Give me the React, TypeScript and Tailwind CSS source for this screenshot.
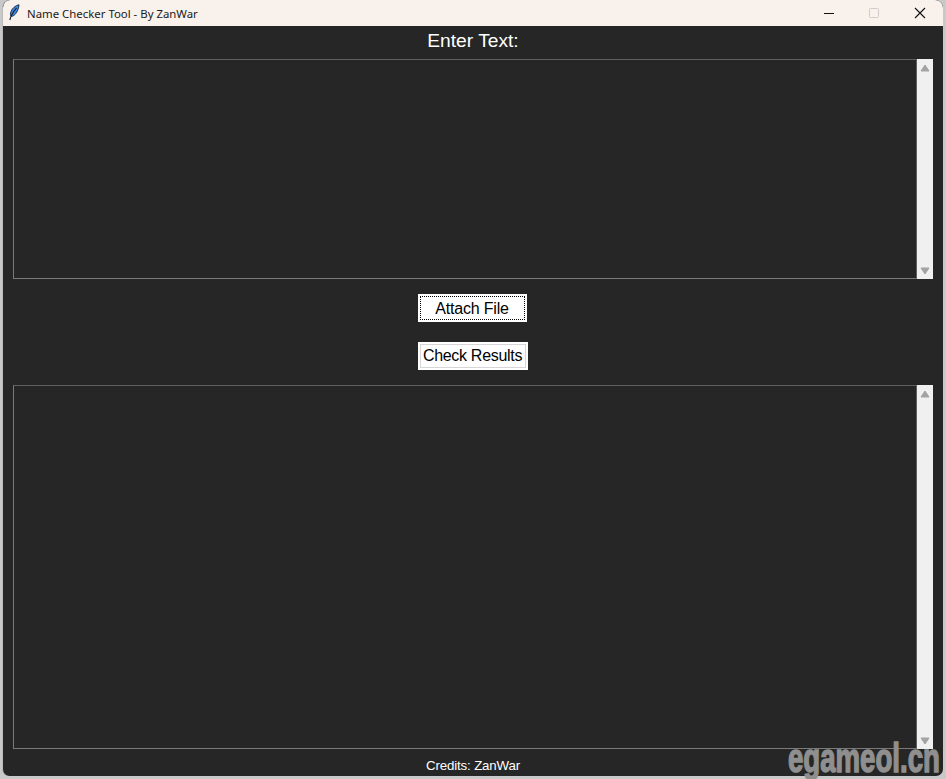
const sans = "font-['Liberation_Sans',Arial,sans-serif]";

const Arrow = ({ down }: { down?: boolean }) => (
  <svg width="16" height="17" viewBox="0 0 16 17" className="block">
    <path d={down ? "M4 7h8l-4 6z" : "M8 5l4 6H4z"} fill="#a3a3a3" stroke="#a3a3a3" strokeWidth="1" strokeLinejoin="round" />
  </svg>
);

const TextArea = ({ className }: { className: string }) => (
  <div className={`flex mx-[10px] ${className}`}>
    <div className="w-[904px] border border-[#7a7a7a] border-t-[#5f5f5f] border-r-[#5f5f5f] bg-[#262626]" />
    <div className="w-4 flex flex-col justify-between bg-[#f0f0f0] pt-[1px] pb-[1px]">
      <Arrow />
      <Arrow down />
    </div>
  </div>
);

const Feather = () => (
  <svg width="12" height="17" viewBox="0 0 12 17">
    <path d="M11 .8C7.500 1.500 3.500 4.500 2.600 9c-.4 2 0 3 .8 3.500C7 12 10.500 7 11 .8z" fill="#3f8ae0" stroke="#10263f" strokeWidth="0.9" />
    <path d="M8.500 4C5.500 7.500 3 11 1.800 16" fill="none" stroke="#0b1420" strokeWidth="1.100" />
  </svg>
);

const TitleBar = () => (
  <div className="h-[26px] flex items-center bg-[#f8f1ec] rounded-t-[7px]">
    <div className="w-[24px] pl-[5px] pb-[2px] flex items-center shrink-0">
      <Feather />
    </div>
    <span className="text-[11.4px] text-[#1a1a1a] font-['Noto_Sans',sans-serif] leading-none pt-[1px]">
      Name Checker Tool - By ZanWar
    </span>
    <div className="ml-auto flex items-center">
      <svg width="46" height="26" viewBox="0 0 46 26">
        <path d="M19 13.500h10" stroke="#111" strokeWidth="1" />
      </svg>
      <svg width="46" height="26" viewBox="0 0 46 26">
        <rect x="18.500" y="8.500" width="9" height="9" rx="1" fill="none" stroke="#cfcbc8" />
      </svg>
      <svg width="46" height="26" viewBox="0 0 46 26">
        <path d="M18 8l10 10M28 8L18 18" stroke="#111" strokeWidth="1.100" />
      </svg>
    </div>
  </div>
);

export default function App() {
  return (
    <div className={`relative w-[946px] h-[779px] overflow-hidden bg-[#c9c9c9] ${sans}`}>
      <div className="w-[941px] h-[776px] ml-[2px] flex flex-col rounded-t-[8px] rounded-b-[7px] overflow-hidden border-l border-[#b9b9b9] bg-[#262626]">
        <TitleBar />
        <div className="h-[33px] flex items-start justify-center text-[19.2px] text-white leading-none pt-[5px]">
          Enter Text:
        </div>
        <TextArea className="h-[220px]" />
        <div className="flex flex-col items-center pt-[15px] pb-[15px] gap-5">
          <button className="w-[109px] h-[28px] -ml-[2px] bg-white p-[2px] text-[16px] tracking-[-0.2px] text-black leading-none">
            <span className="flex h-full items-center justify-center border border-dotted border-black pt-[1px]">
              Attach File
            </span>
          </button>
          <button className="w-[110px] h-[28px] -ml-[1px] bg-white border-2 border-white ring-1 ring-inset ring-[#d6d6d6] text-[16px] tracking-[-0.3px] text-black leading-none whitespace-nowrap">
            Check Results
          </button>
        </div>
        <TextArea className="h-[364px]" />
        <div className="flex-1 flex items-start justify-center text-[13.3px] tracking-[-0.15px] text-white leading-none pt-[10px]">
          Credits: ZanWar
        </div>
      </div>
      <div className="absolute left-[788px] top-[737px] origin-left scale-x-[0.69] text-[40px] leading-[42px] font-bold text-[#8f8f8f] [-webkit-text-stroke:1.5px_#8f8f8f] whitespace-nowrap">
        egameol.cn
      </div>
    </div>
  );
}
